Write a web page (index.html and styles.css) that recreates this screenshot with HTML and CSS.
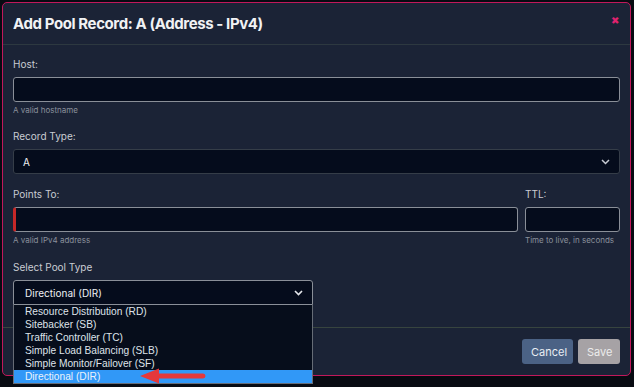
FILE: index.html
```html
<!DOCTYPE html>
<html lang="en">
<head>
    <meta charset="UTF-8">
    <meta name="viewport" content="width=device-width, initial-scale=1.0">
    <title>Add Pool Record</title>
    <link rel="stylesheet" href="styles.css">
</head>
<body>
    <div class="modal">
        <div class="modal-header">
            <h1>Add Pool Record: A (Address - IPv4)</h1>
            <span class="close">&#10006;</span>
        </div>

        <div class="modal-body">
            <div class="field">
                <label>Host:</label>
                <input type="text" class="input">
                <div class="help">A valid hostname</div>
            </div>

            <div class="field">
                <label>Record Type:</label>
                <div class="select dim">
                    <span>A</span>
                    <svg class="chevron" width="9" height="6" viewBox="0 0 9 6"><path d="M1 1l3.5 3.5L8 1" fill="none" stroke="#c8ccd4" stroke-width="1.5"/></svg>
                </div>
            </div>

            <div class="field row">
                <div class="col grow">
                    <label>Points To:</label>
                    <input type="text" class="input invalid">
                    <div class="help">A valid IPv4 address</div>
                </div>
                <div class="col ttl">
                    <label>TTL:</label>
                    <input type="text" class="input">
                    <div class="help">Time to live, in seconds</div>
                </div>
            </div>

            <div class="field pool">
                <label>Select Pool Type</label>
                <div class="select open">
                    <span>Directional (DIR)</span>
                    <svg class="chevron" width="9" height="6" viewBox="0 0 9 6"><path d="M1 1l3.5 3.5L8 1" fill="none" stroke="#e6e8ec" stroke-width="1.6"/></svg>
                </div>
                <ul class="options">
                    <li>Resource Distribution (RD)</li>
                    <li>Sitebacker (SB)</li>
                    <li>Traffic Controller (TC)</li>
                    <li>Simple Load Balancing (SLB)</li>
                    <li>Simple Monitor/Failover (SF)</li>
                    <li class="selected">Directional (DIR)</li>
                </ul>
                <svg class="arrow" width="68" height="18" viewBox="0 0 68 18">
                    <path d="M1 9L20 1.5V6.5H64a2.5 2.5 0 0 1 0 5H20v5z" fill="#e5383b"/>
                </svg>
            </div>
        </div>

        <div class="modal-footer">
            <button class="btn cancel">Cancel</button>
            <button class="btn save">Save</button>
        </div>
    </div>
</body>
</html>
```

FILE: styles.css
```css
body {
    margin: 0;
    width: 634px;
    height: 387px;
    overflow: hidden;
    background-color: #080b12;
    font-family: Inter, "Noto Sans", sans-serif;
}

.modal {
    margin: 2px 0 0 2px;
    width: 627px;
    height: 372px;
    border: 1px solid #c2185b;
    border-radius: 5px;
    background-color: #1b2336;
    display: flex;
    flex-direction: column;
}

.modal-header {
    height: 41px;
    border-bottom: 1px solid #2d3840;
    display: flex;
    align-items: center;
    justify-content: space-between;
    padding: 0 11px 0 10px;
}

.modal-header h1 {
    margin: 0;
    font-size: 15px;
    font-weight: 700;
    letter-spacing: -0.4px;
    color: #f1f2f4;
}

.close {
    color: #e0226f;
    font-size: 10px;
    margin-top: -7px;
}

.modal-body {
    flex: 1;
    padding: 12px 10px 0 10px;
}

.field {
    margin-bottom: 13px;
}

label {
    display: block;
    font-size: 10px;
    line-height: 14px;
    color: #c9ccd3;
    margin-bottom: 6px;
}

.input {
    display: block;
    box-sizing: border-box;
    width: 100%;
    height: 25px;
    margin: 0;
    background-color: #050c1c;
    border: 1px solid #8a8f98;
    border-radius: 3px;
    outline: none;
}

.input.invalid {
    border-left: 3px solid #c62828;
}

.help {
    margin-top: 2px;
    font-size: 8px;
    line-height: 12px;
    color: #8a909b;
}

.row {
    display: flex;
    gap: 7px;
    margin-bottom: 14px;
}

.grow {
    flex: 1;
}

.ttl {
    width: 95px;
}

.select {
    box-sizing: border-box;
    height: 25px;
    background-color: #050c1c;
    border: 1px solid #8a8f98;
    border-radius: 3px;
    display: flex;
    align-items: center;
    justify-content: space-between;
    padding: 0 9px 0 11px;
    font-size: 10px;
    color: #eef0f3;
}

.select.dim {
    border-color: #353d48;
    padding-left: 9px;
    margin-bottom: 12px;
}

.pool {
    position: relative;
    width: 300px;
}

.select.open {
    border-radius: 3px 3px 0 0;
}

.options {
    position: absolute;
    top: 45px;
    left: 0;
    width: 300px;
    box-sizing: border-box;
    margin: 0;
    padding: 0;
    list-style: none;
    background-color: #060d1b;
    border: 1px solid #666c76;
    border-top: none;
    font-family: "Liberation Sans", Arial, sans-serif;
    font-size: 10.2px;
    color: #dfe3ea;
}

.options li {
    height: 13px;
    line-height: 13px;
    padding-left: 11px;
}

.options li.selected {
    background-color: #3198f7;
    color: #eaf2fb;
}

.arrow {
    position: absolute;
    left: 126px;
    top: 107px;
}

.modal-footer {
    height: 47px;
    border-top: 1px solid #37443f;
    display: flex;
    align-items: center;
    justify-content: flex-end;
    gap: 5px;
    padding-right: 10px;
}

.btn {
    height: 25px;
    border: none;
    border-radius: 3px;
    font-family: Inter, "Noto Sans", sans-serif;
    font-size: 11px;
    color: #e9edf3;
    padding: 0 9px;
}

.cancel {
    width: 51px;
    background-color: #4b6285;
}

.save {
    width: 42px;
    background-color: #a6a2a5;
    color: #ececec;
}
```
